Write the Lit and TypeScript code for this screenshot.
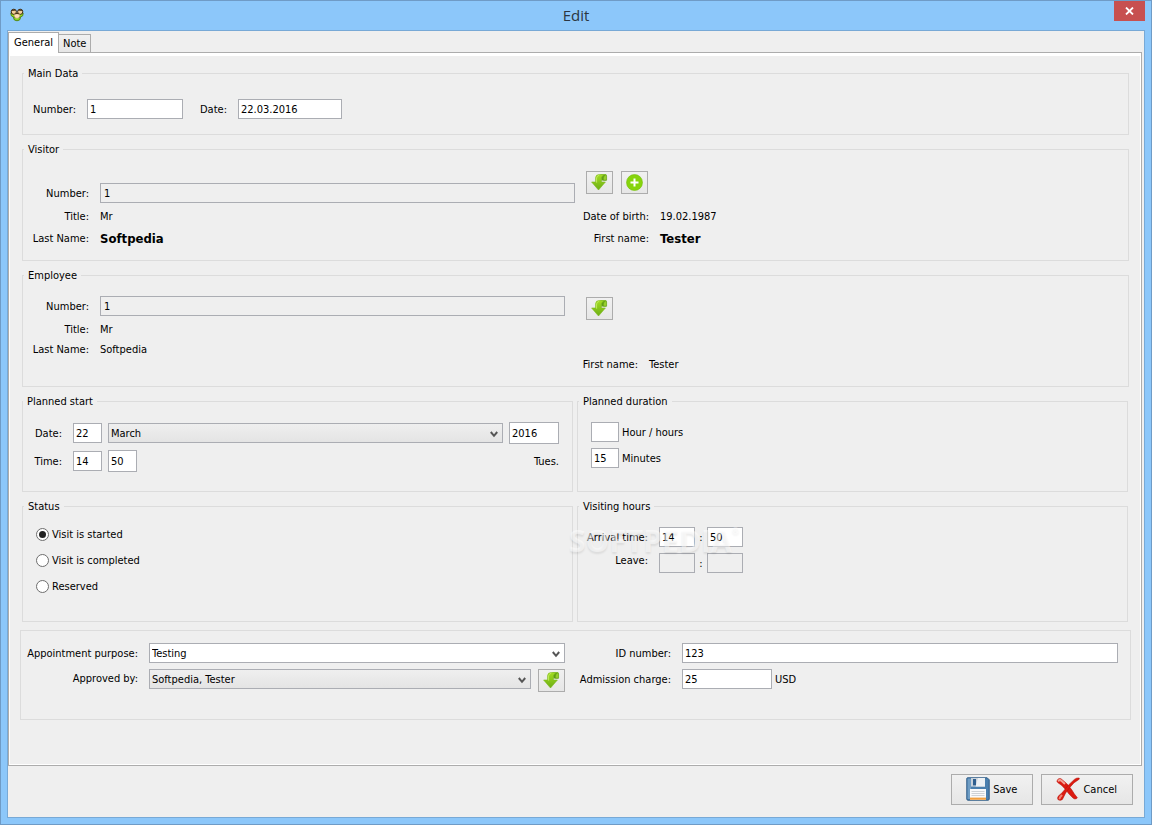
import { LitElement, html, css } from "lit";
import { customElement, property, state } from "lit/decorators.js";
import { classMap } from "lit/directives/class-map.js";

const arrowIcon = html`
  <svg width="17" height="17" viewBox="0 0 17 17" aria-hidden="true">
    <defs>
      <linearGradient id="g" x1="0" y1="0" x2="0" y2="1">
        <stop offset="0" stop-color="#a2dc22" />
        <stop offset="1" stop-color="#6cae14" />
      </linearGradient>
    </defs>
    <path d="M9.6 .5 H15.4 V6.4 H10.4 Z" fill="#5f9d15" />
    <path d="M4.6 8 V3.6 Q4.8 .5 8.4 .5 H14.6 Q10.4 1.2 10.4 4.8 V8 H14.4 L7.5 16 L.6 8 Z"
      fill="url(#g)" stroke="#7cb81c" stroke-width=".6" />
    <path d="M12.4 6.2 V4.2 Q12.4 2 14.4 1 Q15.6 .8 15.6 2 V6.2 Z" fill="#97cf2c" stroke="#5f9d15" stroke-width=".6" />
    <path d="M5.6 8.6 V4 Q5.8 1.6 8.2 1.4" fill="none" stroke="#c2ec5c" stroke-width="1" />
  </svg>`;

const plusIcon = html`
  <svg width="17" height="17" viewBox="0 0 17 17" aria-hidden="true">
    <circle cx="8.5" cy="8.5" r="8" fill="#86d40c" stroke="#76bf0a" stroke-width=".6" />
    <path d="M8.5 4.5 V12.5 M4.5 8.5 H12.5" stroke="#fff" stroke-width="2" />
  </svg>`;

const diskIcon = html`
  <svg class="picture" width="24" height="24" viewBox="0 0 24 24" aria-hidden="true">
    <path d="M1.5 .8 H21.2 L23.2 2.8 V22 Q23.2 23.2 22 23.2 H2 Q.8 23.2 .8 22 V1.5 Q.8 .8 1.5 .8 Z"
      fill="#4a7fae" stroke="#2f5c86" stroke-width="1" />
    <path d="M1.6 1.6 H5 V22 H1.6 Z" fill="#6f9dc4" />
    <rect x="5" y="1" width="14" height="8.6" fill="#c9d2db" />
    <path d="M12 1 H19 V9.6 H9.6 Z" fill="#edf1f4" />
    <rect x="7" y="2" width="3" height="6.4" fill="#2f5f8f" />
    <rect x="4" y="12" width="16" height="11" fill="#fafafa" />
    <path d="M5.5 14.5 H18.5 M5.5 16.5 H18.5 M5.5 18.5 H18.5" stroke="#cfd2d5" stroke-width="1" />
    <rect x="4" y="20.6" width="16" height="2.2" fill="#f2a040" />
  </svg>`;

const crossIcon = html`
  <svg class="picture" width="24" height="24" viewBox="0 0 24 24" aria-hidden="true">
    <path d="M1 3.4 Q2.4 1 5 1.8 Q11 6 15.6 12.6 Q18 17 21.4 20.8 L20.6 21.6 Q18.8 22.6 17 21 Q13 17.6 9.6 12.6 Q6 7.8 2 5.8 Q.6 4.8 1 3.4 Z"
      fill="#dc1a10" stroke="#b8120a" stroke-width=".6" />
    <path d="M23.2 1 Q20.8 .6 18.4 2.4 Q11.6 8.2 7.6 14 Q5 17.2 2.6 18.8 Q1 20.8 2 22.6 Q4 24.2 6.4 22.4 Q9 15.8 13.8 10.4 Q18 5 23.2 2.2 Z"
      fill="#dc1a10" stroke="#b8120a" stroke-width=".6" />
    <path d="M2.6 3.6 Q4 2.6 5.4 3.8 L8.4 6.4" fill="none" stroke="#f4a296" stroke-width="2" stroke-linecap="round" />
    <path d="M3.6 21.4 Q4 20 5.6 18.6" fill="none" stroke="#f08072" stroke-width="2" stroke-linecap="round" />
  </svg>`;

const peopleIcon = html`
  <svg width="14" height="14" viewBox="0 0 14 14" aria-hidden="true">
    <path d="M.8 5 Q.6 8.6 3.4 9 H10.6 Q13.4 8.6 13.2 5 Z" fill="#8fe01c" stroke="#46700f" stroke-width=".8" />
    <circle cx="3.8" cy="3.8" r="2.6" fill="#f3cf9a" stroke="#3b2810" stroke-width="1" />
    <circle cx="10.2" cy="3.8" r="2.6" fill="#f3cf9a" stroke="#3b2810" stroke-width="1" />
    <path d="M1.4 3 Q3.6 0 6 2.6 Z M8 2.6 Q10.4 0 12.6 3 Z" fill="#3b2810" />
    <path d="M3.4 9.4 Q3.6 12.8 7 12.8 Q10.4 12.8 10.6 9.4 Z" fill="#86e01a" stroke="#46700f" stroke-width=".8" />
    <circle cx="7" cy="7.6" r="2.8" fill="#fbdfb6" stroke="#b08a55" stroke-width=".5" />
    <path d="M4.2 6.4 Q7 2.6 9.8 6.4 Q7 5.6 4.2 6.4 Z" fill="#4a3214" />
  </svg>`;

const shared = css`
  * { box-sizing: border-box; }
  button, input, select, textarea { font: inherit; color: inherit; margin: 0; border-radius: 0; }
`;

@customElement("drop-down")
class DropDown extends LitElement {
  @property() name = "";
  @property() label = "";
  @property({ type: Array }) options: string[] = [];
  @property() value = "";
  @property({ type: Boolean, reflect: true }) plain = false;

  static styles = [shared, css`
    :host { display: grid; min-width: 0; }
    select {
      grid-area: 1 / 1; width: 100%; height: 20px; padding: 0 20px 0 2px;
      appearance: none; border: 1px solid #abadb3; outline: none;
      background: linear-gradient(#efefef, #e4e4e4);
    }
    :host([plain]) select { background: #fff; }
    svg { grid-area: 1 / 1; justify-self: end; align-self: center; margin: 3px 5px 0 0; pointer-events: none; }
  `];

  render() {
    return html`
      <select name=${this.name} aria-label=${this.label}>
        ${this.options.map((o) => html`<option ?selected=${o === this.value}>${o}</option>`)}
      </select>
      <svg width="8" height="7" viewBox="0 0 8 7" aria-hidden="true">
        <path d="M.8 1 L4 4.8 L7.2 1" fill="none" stroke="#555" stroke-width="2" />
      </svg>`;
  }
}

@customElement("app-root")
class AppRoot extends LitElement {
  @state() private tab: "general" | "note" = "general";

  static styles = [shared, css`
    :host {
      display: block; color: #000; line-height: 15px;
      font-family: "DejaVu Sans Condensed", "Noto Sans", sans-serif; font-size: 11px;
    }
    .window {
      min-height: 100vh; display: flex; flex-direction: column;
      border: 1px solid #6f9bc6; background: #8cc7fa; padding: 0 6px 6px;
    }
    .titlebar { display: grid; grid-template-columns: 1fr auto 1fr; height: 29px; align-items: start; }
    .app-icon { padding: 7px 0 0 3px; line-height: 0; }
    h1 {
      margin: 0; font-family: "Open Sans", "Noto Sans", sans-serif; font-size: 15px;
      line-height: 29px; font-weight: 400; color: #2b3640;
    }
    .close {
      justify-self: end; width: 31px; height: 20px; padding: 0; border: 0;
      display: grid; place-items: center; background: #c75050;
    }
    .client {
      flex: 1; display: flex; flex-direction: column;
      border: 1px solid #78a9d6; background: #efefef;
    }
    .tabs { display: flex; align-items: flex-end; height: 21px; }
    .tab {
      height: 18px; padding: 0 4px; border: 1px solid #acacac; border-bottom: 0; border-left: 0;
      background: linear-gradient(#f1f1f1, #e6e6e6); white-space: nowrap;
    }
    .tab.on {
      height: 21px; margin-bottom: -1px; padding: 0 5px 2px; z-index: 1;
      border-left: 1px solid #acacac; background: #fff;
    }
    .pane {
      flex: 1; margin-right: 2px; padding: 13px 11px 12px 12px;
      border: 1px solid #acacac; box-shadow: inset 0 0 0 1px #fff, inset 0 3px #fff;
      display: flex; flex-direction: column; gap: 7px;
    }
    .group {
      margin: 0 1px; min-width: 0; border: 1px solid #dcdcdc; padding: 0 4px 11px 12px;
    }
    legend { padding: 0 4px; margin-left: -11px; line-height: 15px; }
    .start legend, .status legend, .duration legend, .visiting legend { margin-left: -12px; }
    .pair { display: grid; grid-template-columns: 1fr 1fr; gap: 4px; margin: 0 2px 0 1px; }
    .pair .group { margin: 0; }
    .halves { display: grid; grid-template-columns: 1fr 1fr; column-gap: 9px; }
    .bottom-aligned { align-items: end; }

    .line { display: flex; align-items: center; white-space: nowrap; }
    .top { align-items: flex-start; }
    .text-row { height: 22px; }
    .grow { flex: 1; min-width: 0; }
    .lab { flex: none; display: flex; justify-content: flex-end; padding-right: 11px; }
    .w38 { width: 38px; }
    .w52 { width: 52px; }
    .w65 { width: 65px; }
    .w68 { width: 68px; }
    .w76 { width: 76px; }
    .w97 { width: 97px; }
    .w117 { width: 117px; }
    .field-high { line-height: 20px; }
    .big { font-size: 13px; font-weight: 700; }

    .field { height: 20px; padding: 0 2px; border: 1px solid #abadb3; background: #fff; outline: none; min-width: 0; }
    .field[readonly] { padding: 0 3px; }
    .field[readonly], .field:disabled { background: #efefef; }
    .tall { height: 22px; }
    .f28 { width: 28px; }
    .f29 { width: 29px; }
    .f36 { width: 36px; }
    .f50 { width: 50px; }
    .f90 { width: 90px; }
    .f96 { width: 96px; }
    .f104 { width: 104px; }
    .gap3 { gap: 3px; }
    .gap6 { gap: 6px; }
    .gap7 { gap: 7px; }

    .btn {
      display: flex; align-items: center; justify-content: center; padding: 0;
      border: 1px solid #acacac; background: linear-gradient(#f1f1f1, #e6e6e6);
    }
    .square { width: 27px; height: 23px; flex: none; }
    .actions { display: flex; gap: 8px; padding-left: 2px; }

    .main-data { padding-top: 18px; padding-bottom: 15px; }
    .main-data .line + .line { margin-left: 17px; }
    .main-body { display: flex; align-items: center; }
    .stack, .rows { display: flex; flex-direction: column; }
    .visitor-left { gap: 2px; padding-top: 26px; }
    .visitor-right { gap: 11px; padding-top: 14px; }
    .employee-left { gap: 2px; padding: 13px 10px 0 0; }
    .employee-right { gap: 33px; padding-top: 14px; }
    .start { padding: 13px 13px 19px 12px; }
    .duration { padding: 13px 13px 19px; }
    .status { padding: 12px 13px 27px; }
    .choices { gap: 10px; }
    .choice { display: flex; align-items: center; gap: 3px; height: 16px; }
    .choice input {
      appearance: none; width: 13px; height: 13px; border: 1px solid #6e6e6e;
      border-radius: 50%; background: #fff; display: grid; place-items: center;
    }
    .choice input:checked::after { content: ""; width: 7px; height: 7px; border-radius: 50%; background: #222; }
    .visiting { position: relative; padding: 13px 13px 27px; }
    .high { align-self: flex-start; }
    .colon { width: 12px; text-align: center; }
    .mark {
      position: absolute; left: -9px; top: 12px; pointer-events: none; user-select: none;
      font-family: "Open Sans", sans-serif; font-weight: 700; font-size: 30px; line-height: 30px;
      color: rgba(255, 255, 255, .5); text-shadow: 0 2px 2px rgba(0, 0, 0, .08);
      display: flex; align-items: flex-start;
    }
    .mark sup { font-size: 9px; line-height: 9px; }
    .extra { margin: 1px -1px 0; padding: 12px 12px 27px 11px; }
    .extra .halves { column-gap: 20px; }
    .note { flex: 1; resize: none; border: 1px solid #abadb3; margin: 6px 0; }

    .footer { display: flex; justify-content: flex-end; gap: 8px; padding: 8px 11px 12px; }
    .command { height: 31px; gap: 3px; padding: 0 15px 0 14px; }
    .picture { margin-bottom: 2px; }
  `];

  private general() {
    return html`
      <fieldset class="group main-data">
        <legend>Main Data</legend>
        <div class="main-body">
          <div class="line"><label class="lab w52" for="num">Number:</label><input id="num" class="field f96" value="1" /></div>
          <div class="line"><label class="lab w38" for="date">Date:</label><input id="date" class="field f104" value="22.03.2016" /></div>
        </div>
      </fieldset>

      <fieldset class="group">
        <legend>Visitor</legend>
        <div class="halves bottom-aligned">
          <div class="stack visitor-left">
            <div class="line"><label class="lab w65" for="vnum">Number:</label><input id="vnum" class="field grow" value="1" readonly /></div>
            <div class="rows">
              <div class="line text-row"><span class="lab w65">Title:</span><span>Mr</span></div>
              <div class="line text-row"><span class="lab w65">Last Name:</span><span class="big">Softpedia</span></div>
            </div>
          </div>
          <div class="stack visitor-right">
            <div class="actions">
              <button class="btn square" aria-label="Choose visitor">${arrowIcon}</button>
              <button class="btn square" aria-label="Add visitor">${plusIcon}</button>
            </div>
            <div class="rows">
              <div class="line text-row"><span class="lab w76">Date of birth:</span><span>19.02.1987</span></div>
              <div class="line text-row"><span class="lab w76">First name:</span><span class="big">Tester</span></div>
            </div>
          </div>
        </div>
      </fieldset>

      <fieldset class="group">
        <legend>Employee</legend>
        <div class="halves">
          <div class="stack employee-left">
            <div class="line"><label class="lab w65" for="enum">Number:</label><input id="enum" class="field grow" value="1" readonly /></div>
            <div class="rows">
              <div class="line text-row"><span class="lab w65">Title:</span><span>Mr</span></div>
              <div class="line field-high"><span class="lab w65">Last Name:</span><span>Softpedia</span></div>
            </div>
          </div>
          <div class="stack employee-right">
            <div class="actions"><button class="btn square" aria-label="Choose employee">${arrowIcon}</button></div>
            <div class="line text-row"><span class="lab w65">First name:</span><span>Tester</span></div>
          </div>
        </div>
      </fieldset>

      <div class="pair">
        <fieldset class="group start">
          <legend>Planned start</legend>
          <div class="stack gap6">
            <div class="line">
              <label class="lab w38" for="day">Date:</label>
              <div class="line gap6 grow">
                <input id="day" class="field f29" value="22" />
                <drop-down class="grow" label="Month" .options=${["January", "February", "March", "April", "May", "June", "July", "August", "September", "October", "November", "December"]} value="March"></drop-down>
                <input class="field tall f50" aria-label="Year" value="2016" />
              </div>
            </div>
            <div class="line">
              <label class="lab w38" for="hour">Time:</label>
              <div class="line gap6 grow">
                <input id="hour" class="field f29" value="14" />
                <input class="field tall f29" aria-label="Minute" value="50" />
              </div>
              <span>Tues.</span>
            </div>
          </div>
        </fieldset>
        <fieldset class="group duration">
          <legend>Planned duration</legend>
          <div class="stack gap6">
            <div class="line gap3"><input id="dh" class="field f28" /><label for="dh">Hour / hours</label></div>
            <div class="line gap3"><input id="dm" class="field f28" value="15" /><label for="dm">Minutes</label></div>
          </div>
        </fieldset>
      </div>

      <div class="pair">
        <fieldset class="group status">
          <legend>Status</legend>
          <div class="stack choices">
            <label class="choice"><input type="radio" name="status" checked />Visit is started</label>
            <label class="choice"><input type="radio" name="status" />Visit is completed</label>
            <label class="choice"><input type="radio" name="status" />Reserved</label>
          </div>
        </fieldset>
        <fieldset class="group visiting">
          <legend>Visiting hours</legend>
          <div class="stack gap6">
            <div class="line">
              <label class="lab w68" for="ah">Arrival time:</label>
              <input id="ah" class="field f36" value="14" /><span class="colon">:</span><input class="field f36" aria-label="Arrival minute" value="50" />
            </div>
            <div class="line">
              <label class="lab w68 high" for="lh">Leave:</label>
              <input id="lh" class="field f36" disabled /><span class="colon">:</span><input class="field f36" aria-label="Leave minute" disabled />
            </div>
          </div>
          <span class="mark">SOFTPEDIA<sup>®</sup></span>
        </fieldset>
      </div>

      <fieldset class="group extra" aria-label="Appointment">
        <div class="halves">
          <div class="stack gap6">
            <div class="line"><span class="lab w117">Appointment purpose:</span><drop-down class="grow" plain label="Appointment purpose" .options=${["Testing"]} value="Testing"></drop-down></div>
            <div class="line top">
              <span class="lab w117 field-high">Approved by:</span>
              <div class="line top gap7 grow">
                <drop-down class="grow" label="Approved by" .options=${["Softpedia, Tester"]} value="Softpedia, Tester"></drop-down>
                <button class="btn square" aria-label="Choose approver">${arrowIcon}</button>
              </div>
            </div>
          </div>
          <div class="stack gap6">
            <div class="line"><label class="lab w97" for="idn">ID number:</label><input id="idn" class="field grow" value="123" /></div>
            <div class="line"><label class="lab w97" for="adm">Admission charge:</label><div class="line gap3"><input id="adm" class="field f90" value="25" /><span>USD</span></div></div>
          </div>
        </div>
      </fieldset>`;
  }

  render() {
    const general = this.tab === "general";
    return html`
      <div class="window">
        <header class="titlebar">
          <span class="app-icon">${peopleIcon}</span>
          <h1>Edit</h1>
          <button class="close" aria-label="Close">
            <svg width="9" height="8" viewBox="0 0 9 8" aria-hidden="true">
              <path d="M1 .5 L8 7.5 M8 .5 L1 7.5" stroke="#fff" stroke-width="1.8" />
            </svg>
          </button>
        </header>
        <div class="client">
          <div class="tabs" role="tablist">
            <button role="tab" class=${classMap({ tab: true, on: general })} aria-selected=${general} @click=${() => (this.tab = "general")}>General</button>
            <button role="tab" class=${classMap({ tab: true, on: !general })} aria-selected=${!general} @click=${() => (this.tab = "note")}>Note</button>
          </div>
          <main class="pane" role="tabpanel">
            ${general ? this.general() : html`<textarea class="note" aria-label="Note"></textarea>`}
          </main>
          <footer class="footer">
            <button class="btn command">${diskIcon}Save</button>
            <button class="btn command">${crossIcon}Cancel</button>
          </footer>
        </div>
      </div>`;
  }
}
